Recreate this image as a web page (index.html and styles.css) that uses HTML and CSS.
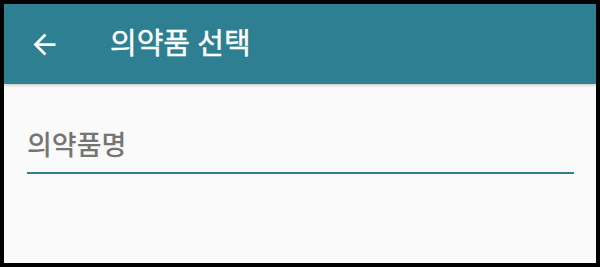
FILE: index.html
```html
<!DOCTYPE html>
<html lang="ko">
<head>
<meta charset="utf-8">
<link rel="stylesheet" href="styles.css">
</head>
<body>
<div class="frame">
  <header class="appbar">
    <svg class="back" viewBox="0 0 24 24" width="33" height="33"><path d="M20 11H7.83l5.59-5.59L12 4l-8 8 8 8 1.41-1.41L7.83 13H20v-2z" fill="#fff"/></svg>
    <h1 class="title">의약품 선택</h1>
  </header>
  <main class="content">
    <div class="field">
      <div class="hint">의약품명</div>
      <div class="line"></div>
    </div>
  </main>
</div>
</body>
</html>
```
FILE: styles.css
```css
html, body { margin: 0; padding: 0; background: #000; }
body { width: 600px; height: 267px; overflow: hidden; font-family: Roboto, "Noto Sans CJK KR", sans-serif; }
.frame { box-sizing: border-box; width: 600px; height: 267px; border: 4px solid #000; background: #fafafa; display: flex; flex-direction: column; }
.appbar { height: 80px; background: #2f7f93; display: flex; align-items: center; padding-left: 24px; box-shadow: 0 1px 3px rgba(0,0,0,0.25); position: relative; z-index: 1; }
.back { display: block; }
.title { margin: 0 0 0 49px; color: #fff; font-size: 29px; font-weight: 400; -webkit-text-stroke: 0.4px #fff; line-height: 1; }
.content { flex: 1; padding: 0 22px 0 23px; }
.field { padding-top: 44px; }
.hint { color: #757575; font-size: 27px; font-weight: 500; line-height: 1.4; }
.line { height: 2px; background: #2f7f93; margin-top: 6px; }
```
